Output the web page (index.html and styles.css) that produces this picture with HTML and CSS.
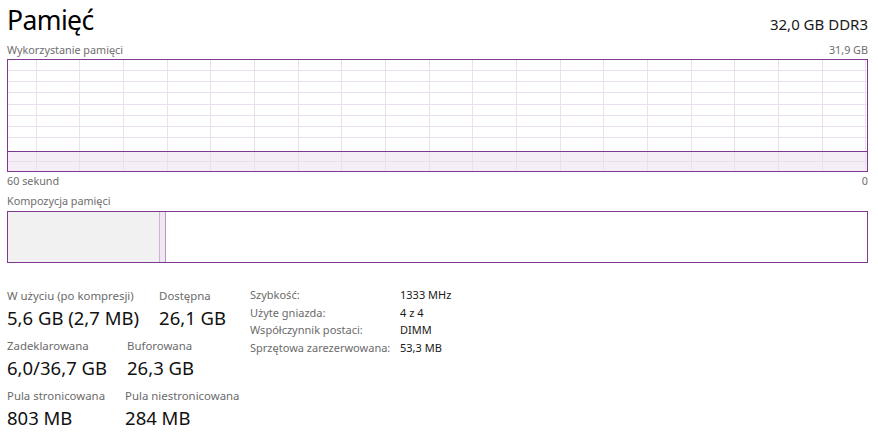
FILE: index.html
```html
<!DOCTYPE html>
<html lang="pl">
<head>
<meta charset="utf-8">
<title>Pamięć</title>
<link rel="stylesheet" href="styles.css">
</head>
<body>
<main class="tm">
  <header class="head">
    <h1 class="title">Pamięć</h1>
    <div class="spec">32,0 GB DDR3</div>
  </header>

  <div class="axis axis-top"><span>Wykorzystanie pamięci</span><span>31,9 GB</span></div>
  <div class="graph">
    <svg class="graph-svg" width="861" height="113" viewBox="0 0 861 113">
      <rect class="g-fill" x="1" y="92" width="859" height="20"/>
      <g class="g-grid">
        <path d="M1 11.5H860M1 22.5H860M1 33.5H860M1 45.5H860M1 56.5H860M1 67.5H860M1 78.5H860M1 102.5H860"/>
        <path d="M29.5 1V112M72.5 1V112M116.5 1V112M160.5 1V112M203.5 1V112M247.5 1V112M291.5 1V112M334.5 1V112M378.5 1V112M422.5 1V112M465.5 1V112M509.5 1V112M553.5 1V112M596.5 1V112M640.5 1V112M684.5 1V112M727.5 1V112M771.5 1V112M815.5 1V112M858.5 1V112"/>
      </g>
      <path class="g-line" d="M1 92.5H860"/>
      <rect class="g-border" x="0.5" y="0.5" width="860" height="112"/>
    </svg>
  </div>
  <div class="axis axis-bottom"><span>60 sekund</span><span>0</span></div>

  <div class="axis axis-comp"><span>Kompozycja pamięci</span></div>
  <div class="comp">
    <div class="comp-used" style="width:151px"></div>
    <div class="comp-mod"></div>
    <div class="comp-rest"></div>
  </div>

  <section class="stats">
    <div class="stat-grid">
      <div class="stat-row">
        <div class="stat"><div class="lbl">W użyciu (po kompresji)</div><div class="val">5,6 GB (2,7 MB)</div></div>
        <div class="stat"><div class="lbl">Dostępna</div><div class="val">26,1 GB</div></div>
      </div>
      <div class="stat-row">
        <div class="stat"><div class="lbl">Zadeklarowana</div><div class="val">6,0/36,7 GB</div></div>
        <div class="stat"><div class="lbl">Buforowana</div><div class="val">26,3 GB</div></div>
      </div>
      <div class="stat-row">
        <div class="stat"><div class="lbl">Pula stronicowana</div><div class="val">803 MB</div></div>
        <div class="stat"><div class="lbl">Pula niestronicowana</div><div class="val">284 MB</div></div>
      </div>
    </div>
    <dl class="info">
      <dt>Szybkość:</dt><dd>1333 MHz</dd>
      <dt>Użyte gniazda:</dt><dd>4 z 4</dd>
      <dt>Współczynnik postaci:</dt><dd>DIMM</dd>
      <dt>Sprzętowa zarezerwowana:</dt><dd>53,3 MB</dd>
    </dl>
  </section>
</main>
</body>
</html>
```

FILE: styles.css
```css
html, body {
  margin: 0;
  padding: 0;
  background: #ffffff;
}

body {
  font-family: "Noto Sans", "Open Sans", sans-serif;
  color: #1a1a1a;
}

.tm {
  width: 861px;
  padding: 0 10px 0 7px;
}

.head {
  display: flex;
  justify-content: space-between;
  align-items: baseline;
  height: 40px;
  padding-top: 2px;
}

.title {
  margin: 0;
  font-size: 26.5px;
  font-weight: 400;
  line-height: 36px;
  color: #000;
  letter-spacing: -0.6px;
}

.spec {
  font-size: 15px;
  color: #1a1a1a;
}

.axis {
  display: flex;
  justify-content: space-between;
  font-size: 10.8px;
  line-height: 16px;
  height: 16px;
  color: #6e6e6e;
}

.axis-top {
  height: 17px;
}

.axis-bottom {
  margin-top: 1px;
}

.axis-comp {
  margin-top: 4px;
}

.graph {
  height: 113px;
}

.graph-svg {
  display: block;
}

.g-fill {
  fill: #f6eef7;
}

.g-grid path {
  stroke: #eadfec;
  stroke-width: 1;
  fill: none;
}

.g-line {
  stroke: #7d3a90;
  stroke-width: 1;
}

.g-border {
  fill: none;
  stroke: #7d3a90;
  stroke-width: 1;
}

.comp {
  display: flex;
  height: 50px;
  margin-top: 2px;
  border: 1px solid #7d3a90;
}

.comp-used {
  background: #f2f1f2;
}

.comp-mod {
  width: 5px;
  background: #f1e7f3;
  border-left: 1px solid #cdb4d3;
  border-right: 1px solid #b995c2;
}

.comp-rest {
  flex: 1;
  background: #ffffff;
}

.stats {
  display: flex;
  align-items: flex-start;
  margin-top: 23px;
}

.stat-grid {
  flex: 0 0 243px;
  padding-top: 2px;
}

.stat-row {
  display: flex;
  gap: 20px;
  height: 50px;
}

.lbl {
  font-size: 11.4px;
  line-height: 16px;
  color: #6b6b6b;
  white-space: nowrap;
}

.val {
  font-size: 18.5px;
  line-height: 24px;
  margin-top: 2px;
  color: #111;
  white-space: nowrap;
}

.info {
  display: grid;
  grid-template-columns: 150px auto;
  align-content: start;
  margin: 0;
  font-size: 11px;
  line-height: 17.5px;
}

.info dt {
  color: #6b6b6b;
  white-space: nowrap;
}

.info dd {
  margin: 0;
  color: #1a1a1a;
  white-space: nowrap;
}
```
